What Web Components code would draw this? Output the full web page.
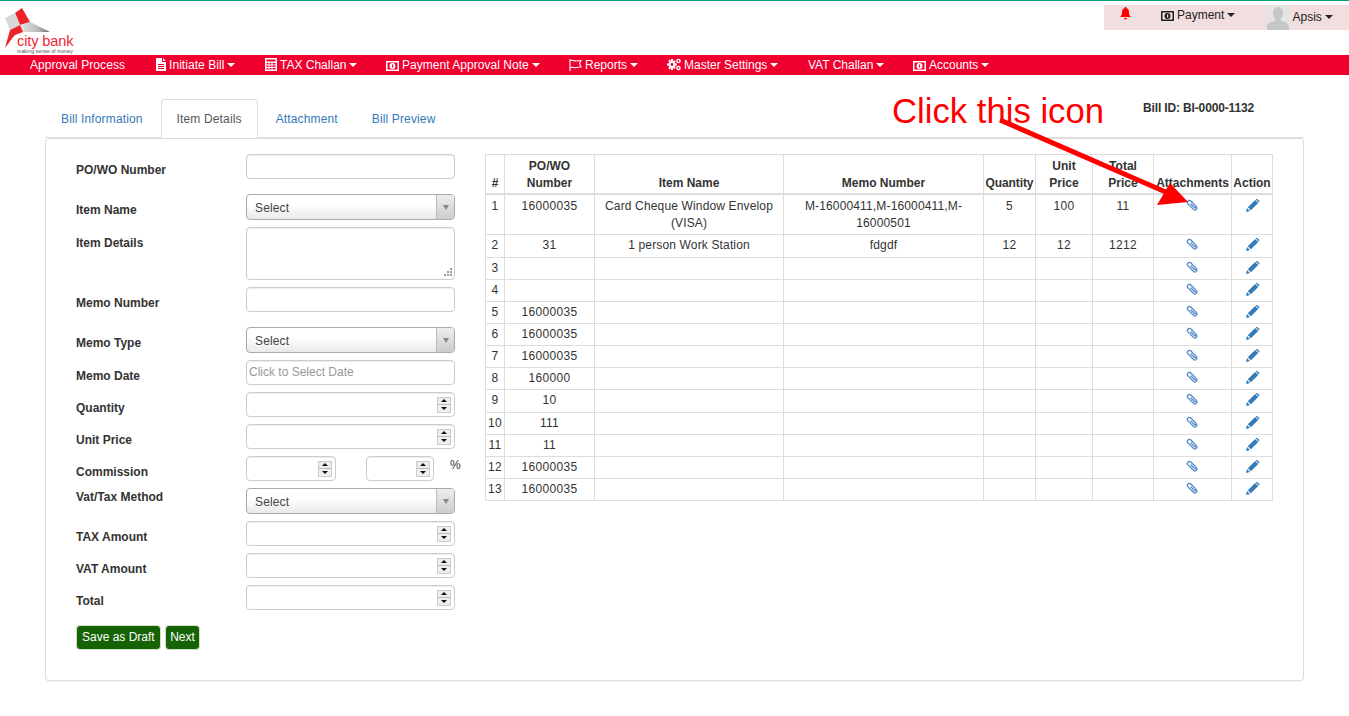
<!DOCTYPE html>
<html lang="en">
<head>
<meta charset="utf-8">
<title>City Bank - Item Details</title>
<style>
html,body{margin:0;padding:0;background:#fff}
body{font:12px/1.42857 "Liberation Sans",Arial,sans-serif;color:#333;position:relative;height:716px;overflow:hidden}
</style>
</head>
<body>
<cb-app></cb-app>
<script>
const ICONS={
 file:'<svg width="10" height="13" viewBox="0 0 10 13"><path fill="currentColor" fill-rule="evenodd" d="M0 0h6v4h4v9H0zM7 0l3 3H7zM2 6v1h6V6zM2 8v1h6V8zM2 10v1h6v-1z"/></svg>',
 calc:'<svg width="12" height="13" viewBox="0 0 12 13"><path fill="currentColor" fill-rule="evenodd" d="M0 0h12v13H0zM1.500 1.500v2h9v-2zM1.500 5v1.500h2V5zM4.500 5v1.500h2V5zM7.500 5v1.500h3V5zM1.500 7.500V9h2V7.500zM4.500 7.500V9h2V7.500zM7.500 7.500V9h3V7.500zM1.500 10v1.500h2V10zM4.500 10v1.500h2V10zM7.500 10v1.500h3V10z"/></svg>',
 money:'<svg width="13" height="10" viewBox="0 0 13 10"><path fill="currentColor" fill-rule="evenodd" d="M0 0h13v10H0zM1.500 1.500v7h10v-7zM6.500 2a3 3 0 1 1 0 6 3 3 0 0 1 0-6zM6 3.500v3h1.200v-3z"/></svg>',
 flag:'<svg width="13" height="12" viewBox="0 0 13 12"><path fill="none" stroke="currentColor" stroke-width="1.100" d="M1 0v12M1.500 1.500c2-1 4 1 6 .5s3-.5 4.500-.5L10.500 4.500 12 8c-2 0-3 0-5 .5S3.500 8 1.500 8.500"/></svg>',
 cogs:'<svg width="14" height="13" viewBox="0 0 14 13"><g fill="currentColor"><circle cx="5" cy="6.500" r="3.600"/><path d="M4 1h2v2H4zM4 10h2v2H4zM0 5.500h2v2H0zM8 5.500h2v2H8zM1.200 2.800l1.400-1.400 1.400 1.400-1.400 1.400zM6 9.600l1.400-1.400 1.400 1.400-1.400 1.400zM1.200 10.200l1.400-1.400 1.400 1.400-1.400 1.400zM6 3.400l1.400-1.400 1.400 1.400-1.400 1.400z"/><circle cx="11.500" cy="3" r="2.300"/><circle cx="11.500" cy="10" r="2.300"/></g><circle cx="5" cy="6.500" r="1.400" fill="#f0002e"/><circle cx="11.500" cy="3" r=".9" fill="#f0002e"/><circle cx="11.500" cy="10" r=".9" fill="#f0002e"/></svg>',
 bell:'<svg width="11" height="13" viewBox="0 0 11 13"><path fill="currentColor" d="M5.500 0a1 1 0 0 1 1 1.200C8.300 1.700 9 3.200 9 5c0 2.500.6 3.800 2 5H0c1.400-1.200 2-2.500 2-5 0-1.800.7-3.300 2.500-3.800A1 1 0 0 1 5.500 0zM4 11h3a1.500 1.500 0 0 1-3 0z"/></svg>',
 clip:'<svg width="13" height="13" viewBox="-3 -3 18 18"><path transform="rotate(-45 6 6)" fill="none" stroke="#4f86c6" stroke-width="1.700" stroke-linecap="round" d="M6 3v7a1.400 1.400 0 0 0 2.800 0V0a2.800 2.800 0 0 0-5.600 0v11a2.800 2.800 0 0 0 5 1.600"/></svg>',
 pencil:'<svg width="14" height="13" viewBox="0 0 14 13" style="margin-left:1px"><path fill="#337ab7" d="M0 13l1-4 3 3zM1.800 8.200 9.200 1l3 3-7.300 7.300zM10 .3C10.500-.1 11-.1 11.400.2l1.700 1.600c.4.400.4 1 0 1.400l-.3.300-3-3z"/></svg>'
};
const caret=`<span style="display:inline-block;width:0;height:0;margin-left:3px;vertical-align:2px;border-top:4px solid currentColor;border-left:4px solid transparent;border-right:4px solid transparent"></span>`;

class CbIcon extends HTMLElement{
  connectedCallback(){
    const r=this.shadowRoot||this.attachShadow({mode:'open'});
    r.innerHTML=`<style>:host{display:inline-flex;align-items:center;vertical-align:-2px;line-height:0}</style>${ICONS[this.getAttribute('name')]||''}`;
  }
}
customElements.define('cb-icon',CbIcon);

class CbLogo extends HTMLElement{
  constructor(){super();this.attachShadow({mode:'open'}).innerHTML=`<style>
  :host{display:block;width:72px;height:46px;position:relative;font-family:"Liberation Sans",Arial,sans-serif}
  svg{display:block;position:absolute;left:0;top:0}
  .name{position:absolute;left:12px;top:25px;font-size:14.500px;line-height:17px;color:#ee2536;white-space:nowrap;letter-spacing:-.1px}
  .tag{position:absolute;left:12px;top:40px;font-size:5.300px;line-height:6px;color:#555;white-space:nowrap}
  </style>
  <svg width="72" height="46" viewBox="0 0 72 46">
   <defs><linearGradient id="g" x1="0" x2="1"><stop offset="0" stop-color="#e4e4e4"/><stop offset=".6" stop-color="#bbb"/><stop offset="1" stop-color="#666"/></linearGradient></defs>
   <path fill="#ee2229" d="M10 5 17 0 25 14 15 17z"/>
   <path fill="#d8d8d8" d="M0 10 10 5 15 17 5 22z"/>
   <path fill="url(#g)" d="M25 14 45 24 18 24 15 17z"/>
   <path fill="#ee2229" d="M5 22 15 17 18 24 10 27C7 30 4 35 0 40z"/>
  </svg>
  <span class="name">city bank</span><span class="tag">making sense of money</span>`;}
}
customElements.define('cb-logo',CbLogo);

class CbUserBox extends HTMLElement{
  constructor(){super();this.attachShadow({mode:'open'}).innerHTML=`<style>
  :host{display:flex;width:245px;height:25px;background:#f2dede;color:#222;font-size:12px;align-items:flex-start;box-sizing:border-box;padding-left:16px}
  .bell{color:#f00;margin-top:2px;width:11px;height:13px}
  .pay{margin:2px 0 0 30px;display:flex;align-items:center;gap:3px;line-height:17px;width:104.500px}
  .pay span{display:inline-block}
  svg.av{display:block;flex:none}
  .me{margin:4px 0 0 3px;line-height:17px}
  </style>
  <cb-icon class="bell" name="bell"></cb-icon>
  <div class="pay"><cb-icon name="money"></cb-icon><span>Payment${caret}</span></div>
  <svg class="av" width="24" height="25" viewBox="0 0 24 25"><rect width="24" height="25" fill="#e4e4e4"/><path fill="#c6c6c6" d="M12 2c3.300 0 5 2.500 5 5.500 0 2.500-1 4.500-2.300 6v2c2 1 6.300 2 8 4.500V25H1v-5c1.700-2.500 6-3.500 8.300-4.500v-2C8 12 7 10 7 7.500 7 4.500 8.700 2 12 2z"/></svg>
  <div class="me">Apsis${caret}</div>`;}
}
customElements.define('cb-user-box',CbUserBox);

class CbHeader extends HTMLElement{
  constructor(){super();this.attachShadow({mode:'open'}).innerHTML=`<style>
  :host{display:flex;justify-content:space-between;height:55px;box-sizing:border-box;border-top:1px solid #00a07f}
  cb-logo{margin:7px 0 0 5px}
  cb-user-box{margin-top:4px}
  </style><cb-logo></cb-logo><cb-user-box></cb-user-box>`;}
}
customElements.define('cb-header',CbHeader);

class CbNavItem extends HTMLElement{
  constructor(){super();this.attachShadow({mode:'open'}).innerHTML=`<style>
  :host{display:block;box-sizing:border-box;flex:none;padding-left:15px;color:#fff;font-size:12px;line-height:20px;white-space:nowrap}
  cb-icon{margin-right:3px}
  </style><span id="i"></span><slot></slot><span id="c"></span>`;}
  connectedCallback(){
    const n=this.getAttribute('icon');
    if(n)this.shadowRoot.getElementById('i').innerHTML=`<cb-icon name="${n}"></cb-icon>`;
    if(this.hasAttribute('caret'))this.shadowRoot.getElementById('c').innerHTML=caret;
  }
}
customElements.define('cb-nav-item',CbNavItem);

class CbNav extends HTMLElement{
  constructor(){super();this.attachShadow({mode:'open'}).innerHTML=`<style>
  :host{display:flex;height:20px;background:#f0002e;padding-left:15px}
  </style><slot></slot>`;}
}
customElements.define('cb-nav',CbNav);

class CbTabs extends HTMLElement{
  constructor(){super();this.attachShadow({mode:'open'}).innerHTML=`<style>
  :host{display:flex;height:39px;box-sizing:border-box;border-bottom:1px solid #ddd;position:relative;font-size:12px}
  a{display:block;margin-right:2px;box-sizing:content-box;height:17px;border:1px solid transparent;border-bottom:0;color:#337ab7;border-radius:4px 4px 0 0;line-height:17px;padding:11px 15px 10px;letter-spacing:.14px}
  a.on{color:#555;background:#fff;border-color:#ddd;position:relative;z-index:1}
  .id{margin-left:auto;margin-right:50px;font-weight:bold;padding-top:1px;line-height:17px;letter-spacing:-.15px}
  </style>
  <a>Bill Information</a><a class="on">Item Details</a><a>Attachment</a><a>Bill Preview</a>
  <div class="id">Bill ID: BI-0000-1132</div>`;}
}
customElements.define('cb-tabs',CbTabs);

const boxCss=`:host{display:flex;box-sizing:border-box;height:25px;width:209px;background:#fff;border:1px solid #ccc;border-radius:4px;box-shadow:inset 0 1px 1px rgba(0,0,0,.075);align-items:center;justify-content:flex-end;font-size:12px;color:#999}`;
class CbInput extends HTMLElement{
  constructor(){super();this.attachShadow({mode:'open'}).innerHTML=`<style>${boxCss}
  :host{justify-content:flex-start;padding-left:2px}</style><slot></slot>`;}
}
customElements.define('cb-input',CbInput);

class CbNumber extends HTMLElement{
  constructor(){super();this.attachShadow({mode:'open'}).innerHTML=`<style>${boxCss}
  :host{padding-right:3px}
  .s{width:14px;height:16px;box-sizing:border-box;background:#eee;border:1px solid #ccc;display:flex;flex-direction:column}
  .b{flex:1;display:flex;align-items:center;justify-content:center}
  .b+.b{border-top:1px solid #bbb}
  i{display:block;width:0;height:0;border-left:3.500px solid transparent;border-right:3.500px solid transparent}
  .u{border-bottom:3.500px solid #111}.d{border-top:3.500px solid #111}
  </style><div class="s"><div class="b"><i class="u"></i></div><div class="b"><i class="d"></i></div></div>`;}
}
customElements.define('cb-number',CbNumber);

class CbSelect extends HTMLElement{
  constructor(){super();this.attachShadow({mode:'open'}).innerHTML=`<style>
  :host{display:flex;box-sizing:border-box;height:26px;width:209px;border:1px solid #aaa;border-radius:4px;background:linear-gradient(#fff 40%,#e9e9e9);font-size:12px;color:#444;overflow:hidden;letter-spacing:.15px}
  .t{flex:1;padding:1px 0 0 8px;line-height:24px}
  .a{width:17px;border-left:1px solid #bbb;background:linear-gradient(#eee,#ccc);display:flex;align-items:center;justify-content:center}
  .a i{display:block;width:0;height:0;border-top:5px solid #888;border-left:3.500px solid transparent;border-right:3.500px solid transparent}
  </style><div class="t"><slot></slot></div><div class="a"><i></i></div>`;}
}
customElements.define('cb-select',CbSelect);

class CbTextarea extends HTMLElement{
  constructor(){super();this.attachShadow({mode:'open'}).innerHTML=`<style>${boxCss}
  :host{height:53px;align-items:flex-end;padding:0 2px 3px 0}
  svg{display:block}
  </style><svg width="8" height="8" viewBox="0 0 8 8"><path fill="#999" d="M6 0h2v2H6zM3 3h2v2H3zM6 3h2v2H6zM0 6h2v2H0zM3 6h2v2H3zM6 6h2v2H6z"/></svg>`;}
}
customElements.define('cb-textarea',CbTextarea);

class CbRow extends HTMLElement{
  constructor(){super();this.attachShadow({mode:'open'}).innerHTML=`<style>
  :host{display:flex;margin-top:var(--gap,7px)}
  label{width:170px;flex:none;font-weight:bold;font-size:12px;line-height:17px;color:#333;padding-top:var(--lab,8px);box-sizing:border-box}
  </style><label></label><slot></slot>`;}
  connectedCallback(){this.shadowRoot.querySelector('label').textContent=this.getAttribute('label');}
}
customElements.define('cb-row',CbRow);

class CbButton extends HTMLElement{
  constructor(){super();this.attachShadow({mode:'open'}).innerHTML=`<style>
  :host{display:block;box-sizing:border-box;height:25px;line-height:23px;padding:0 5px;background:#156305;color:#fff;border:1px solid #cfe0cb;border-radius:4px;font-size:12px;white-space:nowrap}
  </style><slot></slot>`;}
}
customElements.define('cb-button',CbButton);

class CbForm extends HTMLElement{
  constructor(){super();this.attachShadow({mode:'open'}).innerHTML=`<style>
  :host{display:block;width:379px;flex:none}
  .pair{display:flex;align-items:flex-start}
  .pct{margin:1px 0 0 16px;font-size:12px;line-height:17px;color:#333}
  .btns{display:flex;gap:4px;margin-top:15px}
  cb-row:first-of-type{--gap:0px}
  </style>
  <cb-row label="PO/WO Number"><cb-input></cb-input></cb-row>
  <cb-row label="Item Name" style="--gap:15px"><cb-select>Select</cb-select></cb-row>
  <cb-row label="Item Details"><cb-textarea></cb-textarea></cb-row>
  <cb-row label="Memo Number"><cb-input></cb-input></cb-row>
  <cb-row label="Memo Type" style="--gap:15px"><cb-select>Select</cb-select></cb-row>
  <cb-row label="Memo Date"><cb-input>Click to Select Date</cb-input></cb-row>
  <cb-row label="Quantity"><cb-number></cb-number></cb-row>
  <cb-row label="Unit Price"><cb-number></cb-number></cb-row>
  <cb-row label="Commission"><div class="pair"><cb-number style="width:90px"></cb-number><cb-number style="width:68px;margin-left:30px"></cb-number><span class="pct">%</span></div></cb-row>
  <cb-row label="Vat/Tax Method" style="--lab:1px"><cb-select>Select</cb-select></cb-row>
  <cb-row label="TAX Amount"><cb-number></cb-number></cb-row>
  <cb-row label="VAT Amount"><cb-number></cb-number></cb-row>
  <cb-row label="Total"><cb-number></cb-number></cb-row>
  <div class="btns"><cb-button>Save as Draft</cb-button><cb-button style="padding:0 4.500px">Next</cb-button></div>`;}
}
customElements.define('cb-form',CbForm);

class CbTable extends HTMLElement{
  constructor(){super();
    const rows=[
     ['1','16000035','Card Cheque Window Envelop (VISA)','M-16000411,M-16000411,M-16000501','5','100','11'],
     ['2','31','1 person Work Station','fdgdf','12','12','1212'],
     ['3'],['4'],['5','16000035'],['6','16000035'],['7','16000035'],['8','160000'],['9','10'],['10','111'],['11','11'],['12','16000035'],['13','16000035']];
    const body=rows.map((r,i)=>{
      let c='';for(let k=0;k<7;k++){const v=r[k]||'';c+=`<td class="${/^\d+$/.test(v)?'n':''}">${v}</td>`;}
      return `<tr class="${i==0?'first':''}">${c}<td><cb-icon name="clip"></cb-icon></td><td><cb-icon name="pencil"></cb-icon></td></tr>`;
    }).join('');
    this.attachShadow({mode:'open'}).innerHTML=`<style>
    :host{display:block;width:787px;flex:none;font-size:12px;color:#333}
    table{border-collapse:collapse;table-layout:fixed;width:787px}
    th,td{border:1px solid #ddd;padding:2px 2px;text-align:center;line-height:1.42857}
    th{vertical-align:bottom;border-bottom-width:2px;height:34px;font-weight:bold;padding:3px 0 1px}
    th.q{letter-spacing:-.1px}
    td{vertical-align:top;letter-spacing:.15px}
    td.n{letter-spacing:.33px}
    tr.first td{padding:3px 2px 1.900px}
    td:nth-child(3),td:nth-child(4){padding-left:8px;padding-right:8px}
    </style><table>
    <colgroup><col style="width:19px"><col style="width:90px"><col style="width:189px"><col style="width:200px"><col style="width:52px"><col style="width:57px"><col style="width:61px"><col style="width:78px"><col style="width:41px"></colgroup>
    <thead><tr><th>#</th><th>PO/WO<br>Number</th><th>Item Name</th><th>Memo Number</th><th class="q">Quantity</th><th>Unit<br>Price</th><th>Total<br>Price</th><th>Attachments</th><th>Action</th></tr></thead>
    <tbody>${body}</tbody></table>`;}
}
customElements.define('cb-table',CbTable);

class CbPanel extends HTMLElement{
  constructor(){super();this.attachShadow({mode:'open'}).innerHTML=`<style>
  :host{display:flex;gap:30px;box-sizing:border-box;height:543px;border:1px solid #ddd;border-radius:4px;box-shadow:0 1px 1px rgba(0,0,0,.05);padding:15px 0 0 30px;background:#fff;align-items:flex-start}
  </style><slot></slot>`;}
}
customElements.define('cb-panel',CbPanel);

class CbAnnotation extends HTMLElement{
  constructor(){super();this.attachShadow({mode:'open'}).innerHTML=`<style>
  :host{position:absolute;left:0;top:0;width:1349px;height:716px;pointer-events:none}
  svg{position:absolute;left:0;top:0}
  .t{position:absolute;left:892px;top:91px;font:34.700px/40px "Liberation Sans",Arial,sans-serif;color:#f00;white-space:nowrap}
  </style>
  <div class="t">Click this icon</div>
  <svg width="1349" height="716"><path d="M1000 120 1168 193" stroke="#f00" stroke-width="5" fill="none"/><path fill="#f00" d="M1188 202 1157 205 1170 183z"/></svg>`;}
}
customElements.define('cb-annotation',CbAnnotation);

class CbApp extends HTMLElement{
  constructor(){super();this.attachShadow({mode:'open'}).innerHTML=`<style>
  :host{display:block;font-family:"Liberation Sans",Arial,sans-serif}
  main{display:block;margin:24px 45px 0 45px}
  </style>
  <cb-header></cb-header>
  <cb-nav>
   <cb-nav-item style="width:126px;letter-spacing:.06px">Approval Process</cb-nav-item>
   <cb-nav-item style="width:109px;letter-spacing:.06px" icon="file" caret>Initiate Bill</cb-nav-item>
   <cb-nav-item style="width:121px" icon="calc" caret>TAX Challan</cb-nav-item>
   <cb-nav-item style="width:183px;letter-spacing:.03px" icon="money" caret>Payment Approval Note</cb-nav-item>
   <cb-nav-item style="width:98px" icon="flag" caret>Reports</cb-nav-item>
   <cb-nav-item style="width:141px" icon="cogs" caret>Master Settings</cb-nav-item>
   <cb-nav-item style="width:105px" caret>VAT Challan</cb-nav-item>
   <cb-nav-item icon="money" caret>Accounts</cb-nav-item>
  </cb-nav>
  <main>
   <cb-tabs></cb-tabs>
   <cb-panel><cb-form></cb-form><cb-table></cb-table></cb-panel>
  </main>
  <cb-annotation></cb-annotation>`;}
}
customElements.define('cb-app',CbApp);
</script>
</body>
</html>
